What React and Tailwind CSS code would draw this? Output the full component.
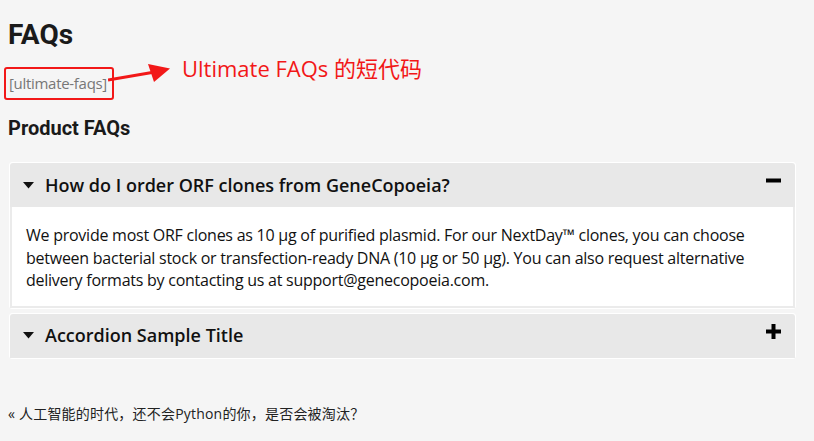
import React from 'react'

const FAQS = [
  {
    q: 'How do I order ORF clones from GeneCopoeia?',
    a: 'We provide most ORF clones as 10 µg of purified plasmid. For our NextDay™ clones, you can choose between bacterial stock or transfection-ready DNA (10 µg or 50 µg). You can also request alternative delivery formats by contacting us at support@genecopoeia.com.',
    open: true,
  },
  { q: 'Accordion Sample Title', a: '', open: false },
]

function Caret() {
  return (
    <svg width="11" height="7" viewBox="0 0 11 7" className="shrink-0">
      <path d="M0 0 H11 L5.5 6.5 Z" fill="#111" />
    </svg>
  )
}

function Toggle({ open }) {
  return (
    <svg width="15" height="15" viewBox="0 0 15 15" className="shrink-0">
      <rect x="0" y="5.5" width="15" height="4" fill="#000" />
      {!open && <rect x="5.5" y="0" width="4" height="15" fill="#000" />}
    </svg>
  )
}

function FaqItem({ item }) {
  return (
    <div className="ml-px mr-[10px] border border-white rounded-[3px] bg-white">
      <div className="flex items-center h-[44px] pl-[13px] pr-[14px] bg-[#e8e8e8] rounded-t-[3px]">
        <Caret />
        <span className="ml-[11px] text-[18px] font-semibold text-[#111] font-['Open_Sans',sans-serif]">
          {item.q}
        </span>
        <div className="flex-1" />
        <div className={item.open ? 'mt-[-10px]' : 'mt-[-8px]'}>
          <Toggle open={item.open} />
        </div>
      </div>
      {item.open && (
        <div className="border-x-2 border-b-2 border-[#ebebeb] px-[14px] pt-[17px] pb-[14px] text-[16px] leading-[22.5px] text-[#111] font-['Open_Sans',sans-serif] tracking-[-0.25px]">
          {item.a}
        </div>
      )}
    </div>
  )
}

export default function App() {
  return (
    <div className="min-h-[441px] bg-[#f5f5f5] px-2 font-['Roboto','Liberation_Sans',sans-serif]">
      {/* 제목 */}
      <h1 className="pt-[19px] text-[28px] leading-[32px] font-bold text-[#1a1a1a]">FAQs</h1>

      {/* 숏코드 + 주석 */}
      <div className="flex items-start mt-[3px]">
        <div className="ml-[-4px] mt-[13px] h-[33px] pl-[3px] pr-[5px] pt-[4px] border-2 border-[#f21818] rounded-[3px] text-[15px] leading-[20px] text-[#777] font-['Open_Sans',sans-serif] tracking-[-0.3px]">
          [ultimate-faqs]
        </div>
        <svg width="64" height="24" viewBox="0 0 64 24" className="mt-[6px] ml-[-6px] shrink-0">
          <path d="M0 20 L44 12.5" stroke="#f21818" strokeWidth="3" />
          <path d="M40 4 L62 8.5 L46 22 Z" fill="#f21818" />
        </svg>
        <span className="ml-[10px] text-[22px] leading-[28px] text-[#f21818] font-['Open_Sans','Noto_Sans_CJK_SC',sans-serif]">
          Ultimate FAQs 的短代码
        </span>
      </div>

      <h2 className="mt-[15px] text-[20px] leading-[27px] font-bold text-[#1a1a1a]">Product FAQs</h2>

      <div className="mt-[20px] flex flex-col gap-[4px]">
        {FAQS.map(f => (
          <FaqItem key={f.q} item={f} />
        ))}
      </div>

      <p className="mt-[45px] text-[14px] leading-[20px] text-[#222] font-['Open_Sans','Noto_Sans_CJK_SC',sans-serif] tracking-[0.2px]">
        « 人工智能的时代，还不会Python的你，是否会被淘汰？
      </p>
    </div>
  )
}
